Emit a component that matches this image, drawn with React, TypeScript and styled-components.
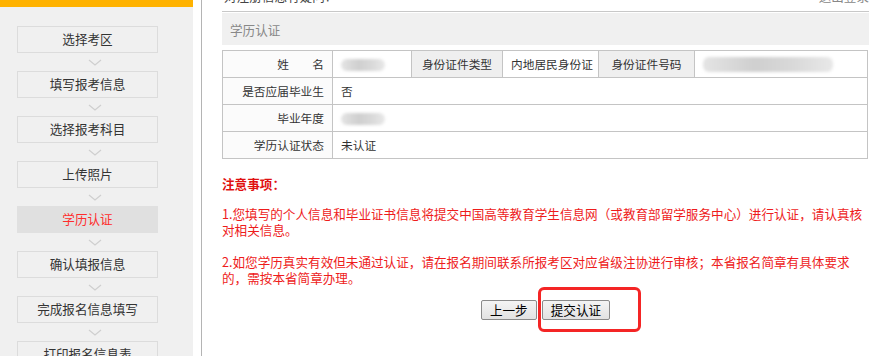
import React from "react";
import styled, { createGlobalStyle } from "styled-components";

const Global = createGlobalStyle`
  html, body { margin: 0; padding: 0; background: #fff; }
  body { font-family: "Noto Sans CJK SC", "Noto Sans", sans-serif; color: #333; }
  * { box-sizing: border-box; }
`;

const Page = styled.div`
  display: flex;
  width: 886px;
  height: 356px;
  overflow: hidden;
`;

const Sidebar = styled.aside`
  width: 193px;
  flex: none;
  background: #f0f0f0;
  border-top: 7px solid #ffb200;
  padding: 19px 0 0 17px;
  display: flex;
  flex-direction: column;
`;

const Step = styled.div<{ $active?: boolean }>`
  width: 141px;
  height: 27px;
  flex: none;
  display: flex;
  align-items: center;
  justify-content: center;
  font-size: 12.6px;
  line-height: 1;
  color: ${(p) => (p.$active ? "#ff2d2d" : "#333")};
  background: ${(p) => (p.$active ? "#e0e0e0" : "#f0f0f0")};
  border: 1px solid ${(p) => (p.$active ? "#e0e0e0" : "#dcdcdc")};
`;

const Arrow = styled.div`
  height: 18px;
  flex: none;
  display: flex;
  align-items: center;
  padding-left: 71px;
`;

const Divider = styled.div`
  width: 9px;
  flex: none;
  border-right: 1px solid #b4b4b4;
`;

const Main = styled.main`
  flex: 1;
  padding: 0 17px 0 20px;
  display: flex;
  flex-direction: column;
`;

const TopBar = styled.div`
  height: 12px;
  flex: none;
  border-bottom: 1px solid #c8c8c8;
  display: flex;
  justify-content: space-between;
  overflow: hidden;
`;

const TopText = styled.span<{ $muted?: boolean }>`
  font-size: 12.6px;
  line-height: 12px;
  margin-top: -10px;
  color: ${(p) => (p.$muted ? "#888" : "#444")};
  padding: 0 ${(p) => (p.$muted ? "0" : "2px")};
`;

const SectionHeader = styled.div`
  margin-top: 1px;
  height: 32px;
  background: #f0f0f0;
  display: flex;
  align-items: center;
  padding-left: 8px;
  font-size: 12.6px;
  color: #888;
`;

const Table = styled.table`
  margin-top: 5px;
  width: 646px;
  border-collapse: collapse;
  table-layout: fixed;
  font-size: 11.7px;
`;

const Cell = styled.td<{ $label?: boolean; $gray?: boolean; $center?: boolean }>`
  height: 27px;
  padding: 0 8px;
  border: 1px solid #c4c4c4;
  text-align: ${(p) => (p.$center ? "center" : p.$label ? "right" : "left")};
  background: ${(p) => (p.$gray ? "#efefef" : p.$label ? "#fbfbfb" : "#fff")};
  color: #333;
  line-height: 1;
  white-space: nowrap;
  vertical-align: middle;
`;

const Blur = styled.span`
  display: inline-block;
  vertical-align: middle;
  height: 12px;
  border-radius: 6px;
  background: linear-gradient(90deg, #e4e4e4, #cfcfcf 40%, #d9d9d9 70%, #e8e8e8);
  filter: blur(1.5px);
`;

const Notes = styled.div`
  margin-top: 17px;
  color: #ee1c1c;
  font-size: 12.6px;
  line-height: 16px;
`;

const NoteTitle = styled.div`
  font-weight: bold;
  color: #e01010;
`;

const NotePara = styled.p<{ $gap: number }>`
  margin: ${(p) => p.$gap}px 0 0;
  line-break: strict;
`;

const Buttons = styled.div`
  margin-top: 14px;
  display: flex;
  justify-content: center;
  gap: 5px;
`;

const Btn = styled.button`
  height: 20px;
  padding: 0 8px;
  font-family: "Noto Sans CJK SC", sans-serif;
  font-size: 12.6px;
  line-height: 1;
  color: #000;
  background: linear-gradient(#f4f4f4, #e2e2e2);
  border: 1px solid #8a8a8a;
  border-radius: 2px;
`;

const Marked = styled.span`
  position: relative;
  display: inline-flex;
`;

const Annotation = styled.span`
  position: absolute;
  left: -4px;
  top: -13px;
  width: 103px;
  height: 45px;
  border: 3px solid #f42525;
  border-radius: 6px;
  pointer-events: none;
`;

const steps = [
  "选择考区",
  "填写报考信息",
  "选择报考科目",
  "上传照片",
  "学历认证",
  "确认填报信息",
  "完成报名信息填写",
  "打印报名信息表",
];

const Chevron = () => (
  <svg width="14" height="7" viewBox="0 0 14 7">
    <polyline points="1,1 7,6 13,1" fill="none" stroke="#cfcfcf" strokeWidth="1.2" />
  </svg>
);

export default function App() {
  return (
    <>
      <Global />
      <Page>
        <Sidebar>
          {steps.map((s, i) => (
            <React.Fragment key={s}>
              <Step $active={s === "学历认证"}>{s}</Step>
              {i < steps.length - 1 && (
                <Arrow>
                  <Chevron />
                </Arrow>
              )}
            </React.Fragment>
          ))}
        </Sidebar>
        <Divider />
        <Main>
          <TopBar>
            <TopText>对注册信息有疑问？</TopText>
            <TopText $muted>退出登录</TopText>
          </TopBar>
          <SectionHeader>学历认证</SectionHeader>
          <Table>
            <colgroup>
              <col style={{ width: 110 }} />
              <col style={{ width: 79 }} />
              <col style={{ width: 91 }} />
              <col style={{ width: 96 }} />
              <col style={{ width: 96 }} />
              <col />
            </colgroup>
            <tbody>
              <tr>
                <Cell $label>姓&emsp;&emsp;名</Cell>
                <Cell>
                  <Blur style={{ width: 44 }} />
                </Cell>
                <Cell $gray $center>身份证件类型</Cell>
                <Cell $center>内地居民身份证</Cell>
                <Cell $gray $center>身份证件号码</Cell>
                <Cell>
                  <Blur style={{ width: 130, height: 15 }} />
                </Cell>
              </tr>
              <tr>
                <Cell $label>是否应届毕业生</Cell>
                <Cell colSpan={5}>否</Cell>
              </tr>
              <tr>
                <Cell $label>毕业年度</Cell>
                <Cell colSpan={5}>
                  <Blur style={{ width: 44 }} />
                </Cell>
              </tr>
              <tr>
                <Cell $label>学历认证状态</Cell>
                <Cell colSpan={5}>未认证</Cell>
              </tr>
            </tbody>
          </Table>
          <Notes>
            <NoteTitle>注意事项：</NoteTitle>
            <NotePara $gap={14}>
              1.您填写的个人信息和毕业证书信息将提交中国高等教育学生信息网（或教育部留学服务中心）进行认证，请认真核对相关信息。
            </NotePara>
            <NotePara $gap={16}>
              2.如您学历真实有效但未通过认证，请在报名期间联系所报考区对应省级注协进行审核；本省报名简章有具体要求的，需按本省简章办理。
            </NotePara>
          </Notes>
          <Buttons>
            <Btn>上一步</Btn>
            <Marked>
              <Btn>提交认证</Btn>
              <Annotation />
            </Marked>
          </Buttons>
        </Main>
      </Page>
    </>
  );
}
